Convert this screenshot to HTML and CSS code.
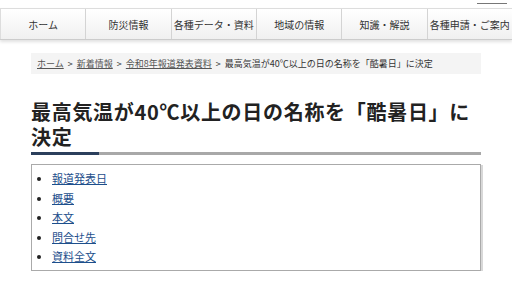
FILE: index.html
```html
<!DOCTYPE html>
<html lang="ja">
    <head>
        <meta charset="UTF-8">
        <meta name="viewport" content="width=device-width, initial-scale=1.0">
        <title>最高気温が40℃以上の日の名称を「酷暑日」に決定</title>
        <link rel="stylesheet" href="styles.css">
    </head>
    <body>
        <div class="topbar"><span class="search"></span></div>
        <nav class="gnav">
            <a href="#">ホーム</a>
            <a href="#">防災情報</a>
            <a href="#">各種データ・資料</a>
            <a href="#">地域の情報</a>
            <a href="#">知識・解説</a>
            <a href="#">各種申請・ご案内</a>
        </nav>
        <div class="main">
            <div class="breadcrumb">
                <a href="#">ホーム</a> &gt; <a href="#">新着情報</a> &gt; <a href="#">令和8年報道発表資料</a> &gt; 最高気温が40℃以上の日の名称を「酷暑日」に決定
            </div>
            <h1>最高気温が40℃以上の日の名称を「酷暑日」に決定</h1>
            <div class="toc">
                <ul>
                    <li><a href="#">報道発表日</a></li>
                    <li><a href="#">概要</a></li>
                    <li><a href="#">本文</a></li>
                    <li><a href="#">問合せ先</a></li>
                    <li><a href="#">資料全文</a></li>
                </ul>
            </div>
        </div>
    </body>
</html>
```
FILE: styles.css
```css
body {
    margin: 0;
    font-family: "Noto Sans CJK JP", "Noto Sans", sans-serif;
    color: #333;
    background: #fff;
}

.topbar {
    height: 8px;
    display: flex;
    justify-content: flex-end;
    padding-right: 5px;
}

.search {
    width: 30px;
    height: 3px;
    border-bottom: 1px solid #777;
}

.gnav {
    display: flex;
    height: 30px;
    border-top: 1px solid #ddd;
    border-bottom: 1px solid #ccc;
    box-shadow: 0 2px 3px rgba(0, 0, 0, 0.12);
}

.gnav a {
    flex: 1;
    display: flex;
    align-items: center;
    justify-content: center;
    font-size: 10px;
    color: #333;
    text-decoration: none;
    background: linear-gradient(#fff, #f0f0f0);
    border-left: 1px solid #d4d4d4;
}

.gnav a:first-child {
    border-left: 1px solid #ddd;
}

.main {
    padding: 13px 31px 0;
}

.breadcrumb {
    background: #f4f4f4;
    font-size: 9px;
    line-height: 21px;
    word-spacing: 2px;
    padding: 0 6px;
    white-space: nowrap;
    overflow: hidden;
}

.breadcrumb a {
    color: #555;
}

h1 {
    margin: 25px 0 0;
    font-size: 20px;
    line-height: 25px;
    letter-spacing: 0.7px;
    font-weight: bold;
    color: #222;
    padding-bottom: 3px;
    border-bottom: 3px solid #a8a8a8;
    position: relative;
}

h1::after {
    content: "";
    position: absolute;
    left: 0;
    bottom: -3px;
    width: 68px;
    height: 3px;
    background: #2b3f5c;
}

.toc {
    margin-top: 9px;
    border: 1px solid #aaa;
    box-shadow: 2px 1px 0 #d8d8d8;
    height: 105px;
}

.toc ul {
    margin: 4px 0 0;
    padding-left: 20px;
    font-size: 11px;
    line-height: 19.5px;
}

.toc li::marker {
    color: #222;
}

.toc a {
    color: #1d4f8c;
}
```
